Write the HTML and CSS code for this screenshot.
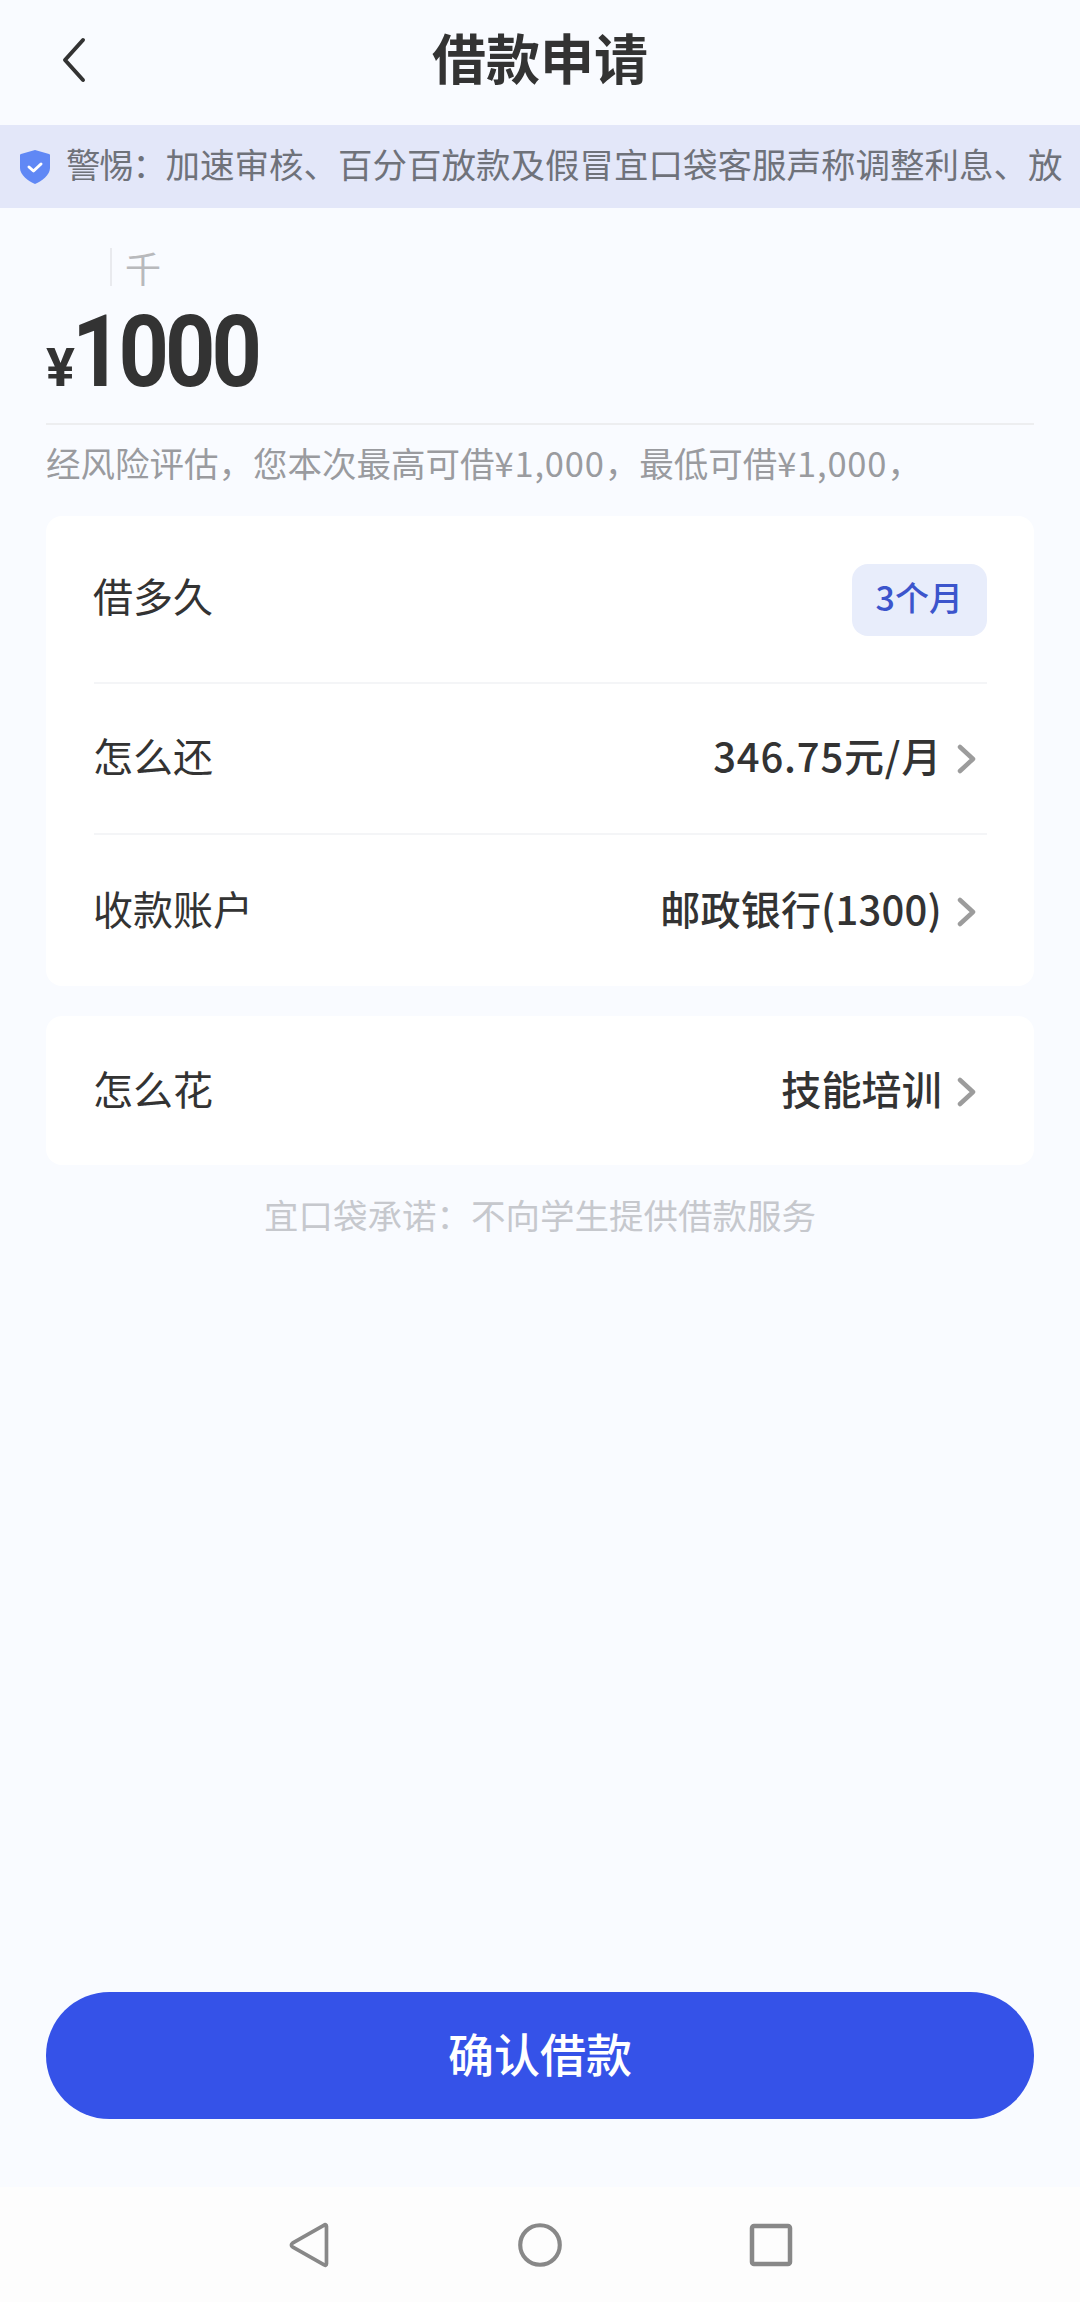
FILE: index.html
```html
<!DOCTYPE html>
<html lang="zh-CN">
<head>
    <meta charset="UTF-8">
    <meta name="viewport" content="width=device-width, initial-scale=1.0">
    <title>借款申请</title>
    <link rel="stylesheet" href="styles.css">
</head>
<body>
    <div class="page">
        <header class="header">
            <span class="back">
                <svg viewBox="0 0 30 48" fill="none" xmlns="http://www.w3.org/2000/svg">
                    <path d="M25 4 7 24l18 20" stroke="currentColor" stroke-width="4" stroke-linecap="round" stroke-linejoin="round"/>
                </svg>
            </span>
            <h1>借款申请</h1>
        </header>

        <div class="notice">
            <svg class="shield" viewBox="0 0 30 34" xmlns="http://www.w3.org/2000/svg">
                <path d="M15 0 29 4c1 .3 1 1 1 2v12c0 7-8 13-15 16C8 31 0 25 0 18V6c0-1 0-1.700 1-2z" fill="#6088f5"/>
                <path d="m9 17 4.500 4L21 14" fill="none" stroke="#fff" stroke-width="3" stroke-linecap="round" stroke-linejoin="round"/>
            </svg>
            <span class="notice-text"><span class="notice-head">警惕：</span>加速审核、百分百放款及假冒宜口袋客服声称调整利息、放</span>
        </div>

        <section class="amount">
            <div class="unit-row">
                <span class="caret"></span>
                <span class="unit">千</span>
            </div>
            <div class="amount-value"><span class="yen">¥</span><span class="num">1000</span></div>
            <p class="limit">经风险评估，您本次最高可借<span class="money">¥1,000</span>，最低可借<span class="money">¥1,000</span>，</p>
        </section>

        <section class="card">
            <div class="row row-term">
                <span class="label">借多久</span>
                <span class="tag">3个月</span>
            </div>
            <div class="row row-repay">
                <span class="label">怎么还</span>
                <span class="value">346.75元/月</span>
                <svg class="arrow" viewBox="0 0 20 30" fill="none" xmlns="http://www.w3.org/2000/svg">
                    <path d="m3 3 13 12L3 27" stroke="currentColor" stroke-width="4.500" stroke-linecap="round" stroke-linejoin="round"/>
                </svg>
            </div>
            <div class="row row-account">
                <span class="label">收款账户</span>
                <span class="value">邮政银行(1300)</span>
                <svg class="arrow" viewBox="0 0 20 30" fill="none" xmlns="http://www.w3.org/2000/svg">
                    <path d="m3 3 13 12L3 27" stroke="currentColor" stroke-width="4.500" stroke-linecap="round" stroke-linejoin="round"/>
                </svg>
            </div>
        </section>

        <section class="card card-use">
            <div class="row row-use">
                <span class="label">怎么花</span>
                <span class="value">技能培训</span>
                <svg class="arrow" viewBox="0 0 20 30" fill="none" xmlns="http://www.w3.org/2000/svg">
                    <path d="m3 3 13 12L3 27" stroke="currentColor" stroke-width="4.500" stroke-linecap="round" stroke-linejoin="round"/>
                </svg>
            </div>
        </section>

        <p class="promise">宜口袋承诺：不向学生提供借款服务</p>

        <div class="footer">
            <button class="submit" type="button">确认借款</button>
        </div>

        <nav class="navbar">
            <svg viewBox="0 0 46 50" fill="none" xmlns="http://www.w3.org/2000/svg">
                <path d="M42 4.500v41c0 1.500-1.500 2-2.500 1L5 27c-1.500-1-1.500-3 0-4L39.500 3.500c1-1 2.500-.5 2.500 1z" stroke="currentColor" stroke-width="4" stroke-linejoin="round"/>
            </svg>
            <svg viewBox="0 0 50 50" fill="none" xmlns="http://www.w3.org/2000/svg">
                <circle cx="25" cy="25" r="21.500" stroke="currentColor" stroke-width="4.500"/>
            </svg>
            <svg viewBox="0 0 46 46" fill="none" xmlns="http://www.w3.org/2000/svg">
                <rect x="4" y="4" width="38" height="38" rx="2" stroke="currentColor" stroke-width="4.500"/>
            </svg>
        </nav>
    </div>
</body>
</html>
```

FILE: styles.css
```css
* {
    margin: 0;
    padding: 0;
    box-sizing: border-box;
}
body {
    background: #f9fbff;
    font-family: "Noto Sans CJK SC", "Noto Sans", sans-serif;
    color: #333;
}
.page {
    display: flex;
    flex-direction: column;
    width: 1080px;
    height: 2302px;
    overflow: hidden;
}
.header {
    position: relative;
    display: flex;
    justify-content: center;
    align-items: center;
    height: 125px;
    padding-bottom: 11px;
}
.header h1 {
    font-size: 54px;
    font-weight: 700;
    line-height: 70px;
    color: #333;
}
.back {
    position: absolute;
    top: 36px;
    left: 58px;
    width: 30px;
    height: 48px;
    color: #333;
}
.back svg {
    display: block;
    width: 100%;
    height: 100%;
}
.notice {
    display: flex;
    align-items: center;
    gap: 16px;
    height: 83px;
    padding-left: 20px;
    background: #e3e7f9;
}
.shield {
    flex: none;
    width: 30px;
    height: 34px;
}
.notice-text {
    padding-bottom: 8px;
    font-size: 34.5px;
    color: #6f727a;
    white-space: nowrap;
}
.notice-head {
    letter-spacing: -1.3px;
}
.amount {
    margin: 0 46px;
}
.unit-row {
    display: flex;
    align-items: center;
    gap: 13px;
    height: 42px;
    margin-top: 38px;
    padding-left: 64px;
}
.caret {
    width: 2px;
    height: 38px;
    background: #e9eaee;
}
.unit {
    font-size: 36px;
    line-height: 42px;
    color: #b8b9bc;
}
.amount-value {
    display: flex;
    align-items: baseline;
    height: 137px;
    padding-top: 5px;
    border-bottom: 2px solid #edeef0;
    font-family: Roboto, sans-serif;
    font-weight: 700;
    color: #333;
}
.yen {
    font-size: 54px;
    line-height: 118px;
}
.num {
    display: inline-block;
    margin-left: -3px;
    font-size: 100px;
    line-height: 118px;
    letter-spacing: -4.5px;
    transform: scaleX(.88);
    transform-origin: left;
}
.limit {
    margin-top: 12px;
    font-size: 34.5px;
    line-height: 50px;
    color: #9a9b9f;
    white-space: nowrap;
}
.money {
    letter-spacing: .8px;
}
.card {
    margin: 29px 46px 0;
    padding: 0 47px 0 48px;
    background: #fff;
    border-radius: 16px;
}
.row {
    display: flex;
    align-items: center;
    font-size: 40px;
    color: #333;
}
.row-term {
    height: 168px;
    padding-bottom: 8px;
    border-bottom: 2px solid #f4f5f7;
}
.row-repay {
    height: 151px;
    padding-bottom: 8px;
    border-bottom: 2px solid #f4f5f7;
}
.row-account {
    height: 151px;
    padding-bottom: 5px;
}
.card-use {
    margin-top: 30px;
}
.row-use {
    height: 149px;
    padding-bottom: 5px;
}
.label {
    margin-left: -1px;
    margin-right: auto;
}
.tag {
    margin-top: 10px;
    padding: 0 24px 6px;
    line-height: 66px;
    font-size: 34px;
    font-weight: 500;
    color: #3c55cc;
    background: #e8edfb;
    border-radius: 16px;
}
.value {
    font-weight: 500;
    letter-spacing: .2px;
}
.row-repay .value {
    letter-spacing: .8px;
}
.arrow {
    flex: none;
    width: 20px;
    height: 30px;
    margin: 8px 10px 0 15px;
    color: #9c9c9c;
}
.promise {
    margin-top: 24px;
    font-size: 34.5px;
    line-height: 50px;
    text-align: center;
    color: #c6c8cd;
}
.footer {
    display: flex;
    flex: 1;
    align-items: flex-end;
    padding: 0 46px 68px;
}
.submit {
    width: 100%;
    height: 127px;
    padding-bottom: 8px;
    background: #3552e8;
    border: none;
    border-radius: 64px;
    font-family: inherit;
    font-size: 46px;
    font-weight: 500;
    color: #fff;
}
.navbar {
    display: flex;
    justify-content: center;
    align-items: center;
    gap: 185px;
    height: 115px;
    background: #fdfdfd;
    color: #888;
}
.navbar svg {
    height: 46px;
    width: 46px;
}
```
